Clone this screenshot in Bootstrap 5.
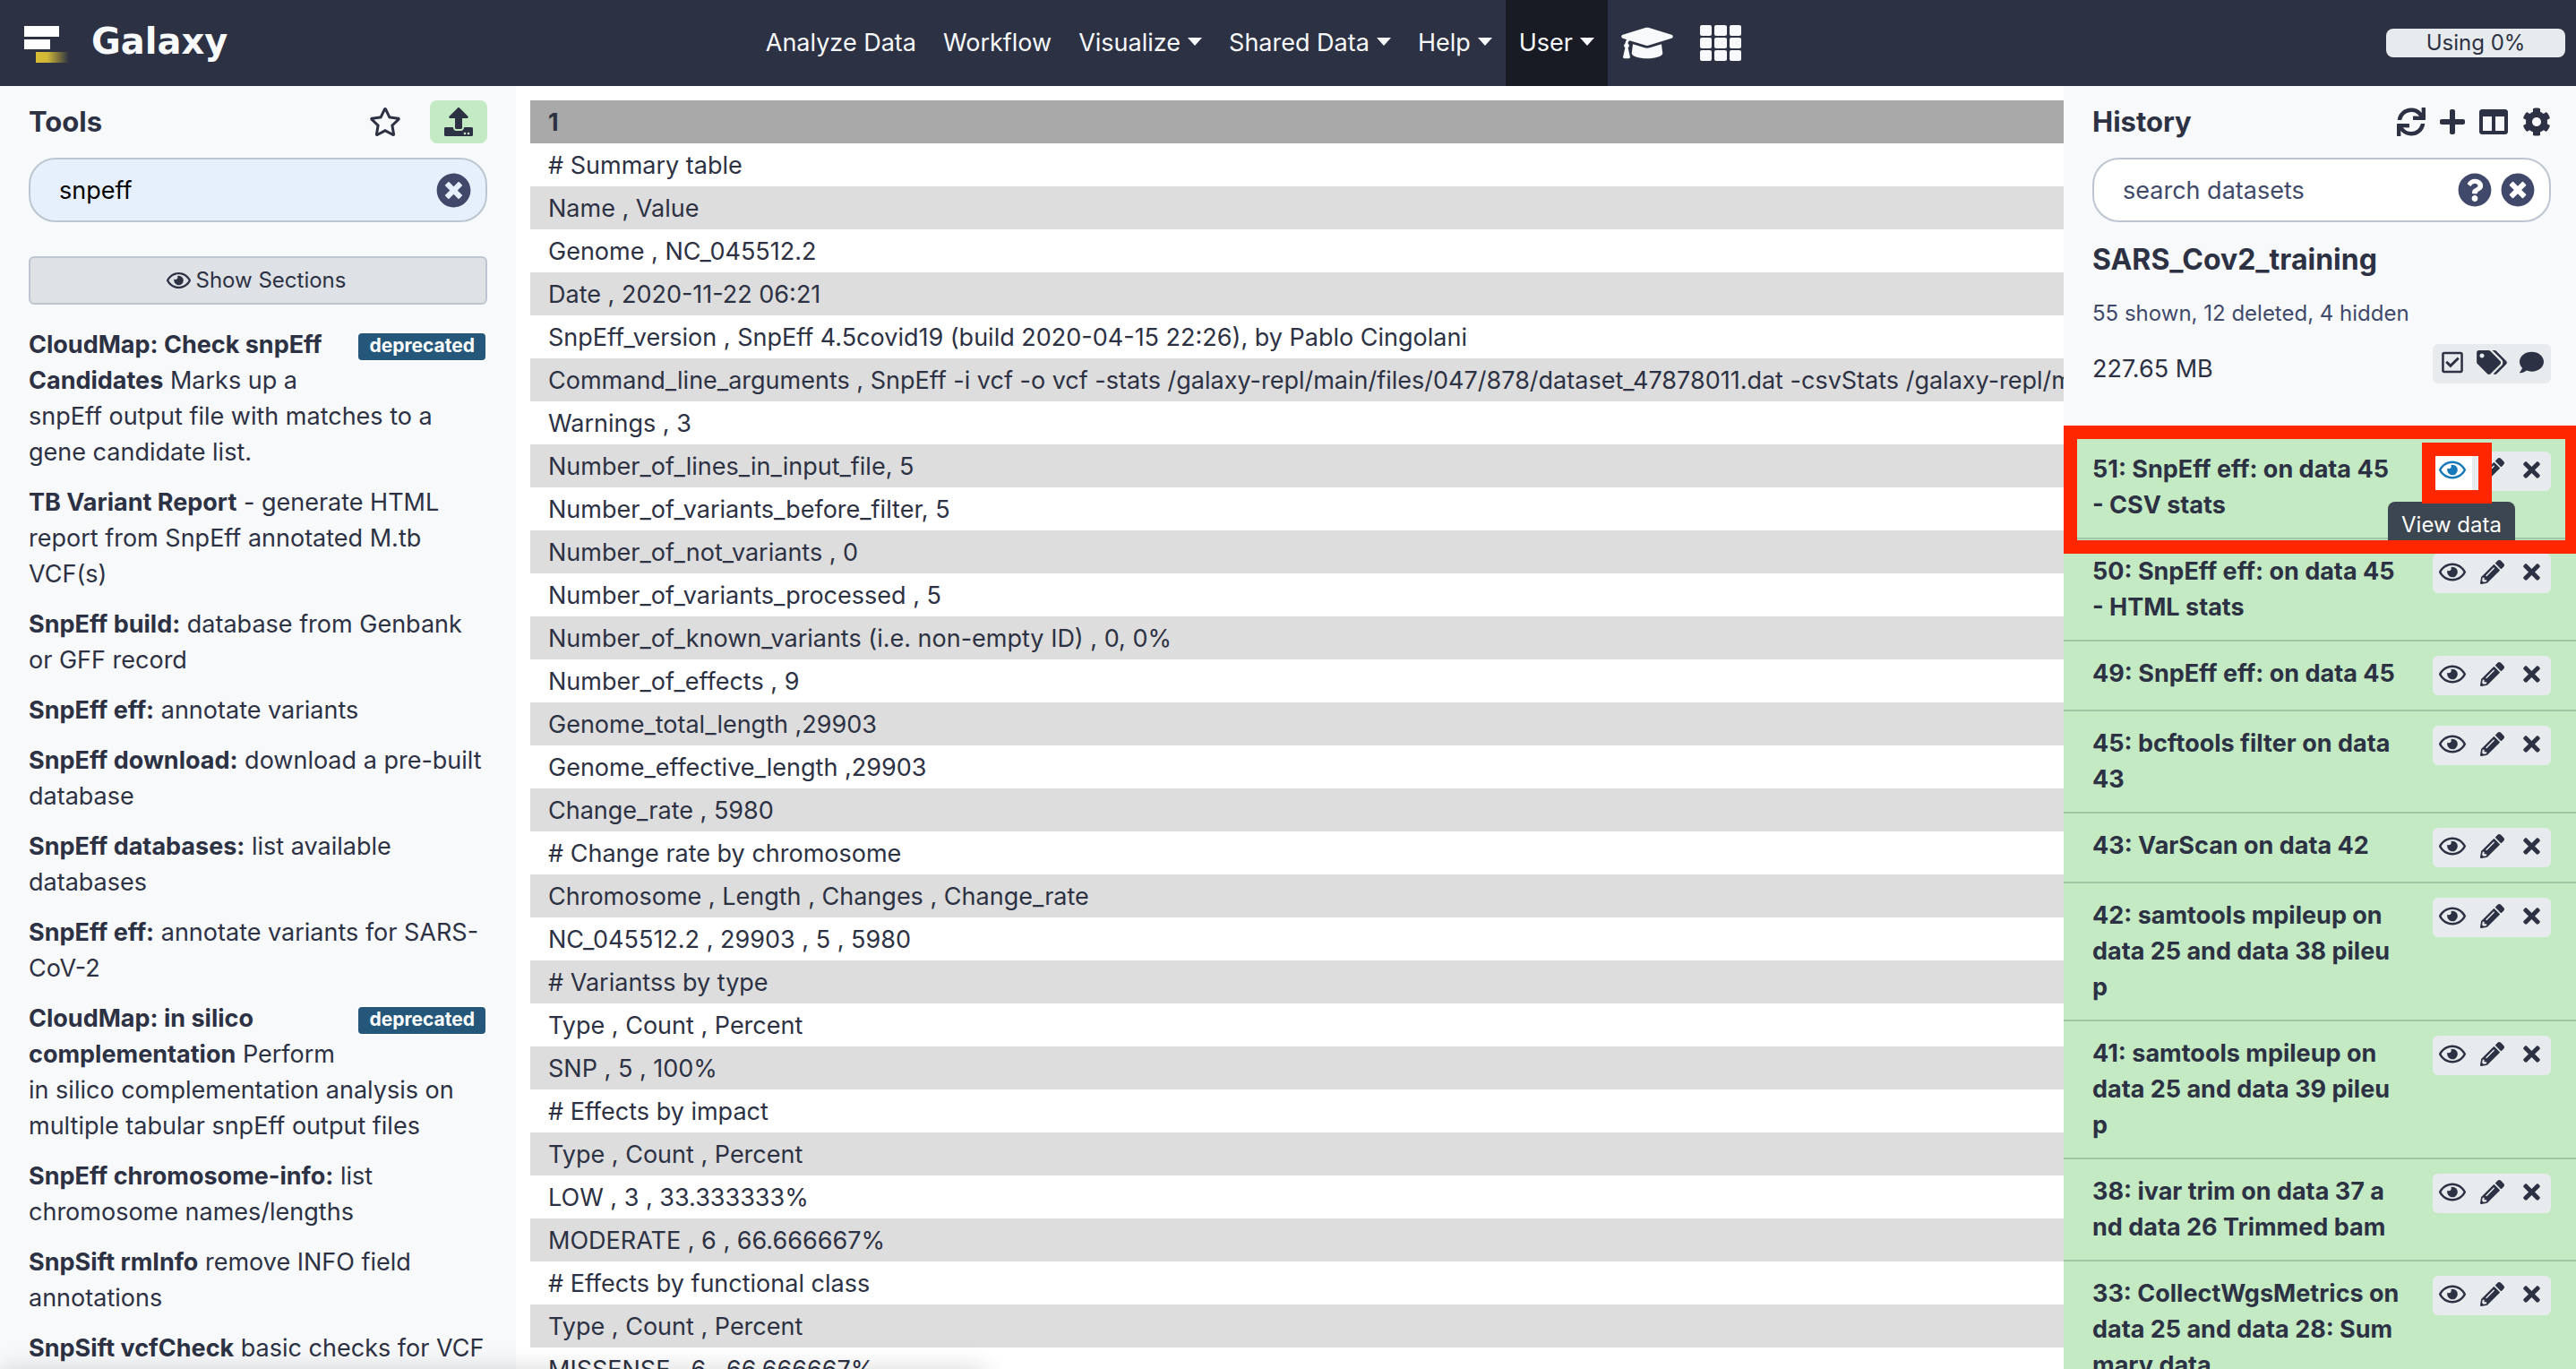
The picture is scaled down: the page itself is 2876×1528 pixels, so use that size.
<!DOCTYPE html>
<html lang="en">
<head>
<meta charset="utf-8">
<meta name="viewport" content="width=device-width, initial-scale=1">
<title>Galaxy</title>
<link href="https://cdn.jsdelivr.net/npm/bootstrap@5.3.0/dist/css/bootstrap.min.css" rel="stylesheet">
<script src="https://cdn.jsdelivr.net/npm/bootstrap@5.3.0/dist/js/bootstrap.bundle.min.js"></script>
<style>
:root { --ink: #2c3143; --soft-ink: #40496a; --panel: #f8f9fb; --ok: #c4eac4; --line: #bdc6d0; --chip: #e8ebee; }
body { font-family: Inter, "Liberation Sans", sans-serif; font-size: 27px; line-height: 40px; color: var(--ink); background: #fff; }
svg { fill: currentColor; display: block; flex: none; }
a { color: inherit; text-decoration: none; }
.masthead { height: 96px; background: var(--ink); color: #f8f9fb; }
.brand-area { flex: 0 0 29.2%; padding-left: 24px; gap: 24px; }
.brand-name { font-family: "DejaVu Sans", sans-serif; font-weight: 700; font-size: 40px; padding-bottom: 4px; }
.masthead .nav-link { display: flex; align-items: center; height: 96px; padding: 0 15px; color: inherit; }
.masthead .nav-link.current { background: #181a24; }
.masthead .dropdown-toggle::after { border-top: 9px solid; border-left: 8px solid transparent; border-right: 8px solid transparent; margin-left: 8px; margin-bottom: 4px; vertical-align: 0; }
.quota { width: 200px; height: 32px; line-height: 32px; border-radius: 8px; background: var(--chip); color: var(--ink); font-size: 24px; margin-right: 12px; }
.side-panel { background: var(--panel); overflow: hidden; }
.tools-panel { flex: 0 0 576px; padding: 16px 32px 0; }
.history-panel { flex: 0 0 572px; padding-top: 16px; }
.history-top { padding: 0 28px 0 32px; height: 376px; }
.panel-head { height: 48px; }
.panel-title { font-size: 31px; font-weight: 700; line-height: 48px; margin: 0; }
.icon-btn { border: 0; background: transparent; color: inherit; padding: 0; display: flex; align-items: center; justify-content: center; }
.upload-btn { width: 64px; height: 48px; background: var(--ok); border-radius: 8px; }
.search-box { height: 72px; margin-top: 16px; border: 2px solid var(--line); border-radius: 30px; background: #fff; padding: 0 16px 0 32px; gap: 10px; color: var(--soft-ink); }
.search-box.filled { background: #e6f0fd; }
.search-box input { border: 0; outline: 0; background: transparent; flex: 1 1 0; min-width: 0; padding: 2px 0 0; line-height: 40px; color: #000; }
.search-box input::placeholder { color: var(--soft-ink); opacity: 1; }
.sections-btn { height: 54px; margin: 38px 0 25px; border: 2px solid var(--line); border-radius: 6px; background: #dee1e6; color: var(--ink); font-size: 24px; gap: 6px; padding: 0 4px 0 0; }
.tool-link { display: block; margin-bottom: 16px; }
.old-tag { float: right; margin: 7px 2px 12px 12px; padding: 0 12px; height: 30px; line-height: 28px; font-size: 21px; font-weight: 700; color: #fff; background: #25577b; border-radius: 4px; box-shadow: 0 0 0 2px #fff; }
.center-panel { min-width: 0; flex: 1 1 0; padding: 16px 0 0 16px; overflow: hidden; }
.peek { width: 100%; white-space: nowrap; border-collapse: collapse; }
.peek th, .peek td { padding: 5px 20px 3px; height: 48px; }
.peek th { background: #a9a9a9; }
.peek tbody tr:nth-child(even) { background: #ddd; }
.workspace { height: calc(100vh - 96px); overflow: hidden; }
.history-name { font-size: 32px; font-weight: 700; line-height: 40px; margin: 22px 0 0; }
.history-counts { font-size: 24px; color: var(--soft-ink); margin-top: 20px; }
.size-row { height: 44px; margin-top: 14px; }
.size-row > span { padding-top: 8px; }
.chip-bar { width: 132px; height: 44px; background: var(--chip); border-radius: 6px; overflow: hidden; flex: none; }
.chip-bar .icon-btn { width: 44px; height: 44px; padding-bottom: 4px; }
.chip-bar .icon-btn.hot { background: #fff; color: #1779ba; }
.dataset { background: var(--ok); border-bottom: 2px solid #a0c4a4; padding: 16px 28px 16px 32px; font-weight: 700; position: relative; }
.tip { position: absolute; z-index: 1; right: 68px; top: 72px; width: 142px; height: 43px; padding-top: 6px; background: #3c4650; color: #fff; font-size: 24px; font-weight: 400; text-align: center; border-radius: 8px 8px 0 0; }
.ring-row { position: absolute; z-index: 2; left: 0; right: 0; top: -13px; height: 143px; border: 15px solid #ff2600; border-right-width: 12px; pointer-events: none; }
.ring-eye { position: absolute; z-index: 3; right: 94px; top: 6px; width: 78px; height: 68px; border: 15px solid #ff2600; pointer-events: none; }
.bottom-shade { position: fixed; left: 0; bottom: -40px; width: 1100px; height: 40px; box-shadow: 0 0 28px rgba(0,0,0,.16); }
</style>
</head>
<body>
<svg width="0" height="0" class="position-absolute" aria-hidden="true">
<symbol id="i-eye" viewBox="0 0 576 512"><path d="M288 144a110.94 110.94 0 0 0-31.24 5 55.4 55.4 0 0 1 7.24 27 56 56 0 0 1-56 56 55.4 55.4 0 0 1-27-7.24A111.71 111.71 0 1 0 288 144zm284.52 97.4C518.29 135.59 410.93 64 288 64S57.68 135.64 3.48 241.41a32.35 32.35 0 0 0 0 29.19C57.71 376.41 165.07 448 288 448s230.32-71.64 284.52-177.41a32.35 32.35 0 0 0 0-29.19zM288 400c-98.65 0-189.09-55-237.93-144C98.91 167 189.34 112 288 112s189.09 55 237.93 144C477.1 345 386.66 400 288 400z"/></symbol>
<symbol id="i-pencil" viewBox="0 0 512 512"><path d="M497.9 142.1l-46.1 46.1c-4.7 4.7-12.3 4.7-17 0l-111-111c-4.7-4.7-4.7-12.3 0-17l46.1-46.1c18.7-18.7 49.1-18.7 67.9 0l60.1 60.1c18.8 18.7 18.8 49.1 0 67.9zM284.2 99.8L21.6 362.4.4 483.9c-2.9 16.4 11.4 30.6 27.8 27.8l121.5-21.3 262.6-262.6c4.7-4.7 4.7-12.3 0-17l-111-111c-4.8-4.7-12.4-4.7-17.1 0zM124.1 339.9c-5.5-5.5-5.5-14.3 0-19.8l154-154c5.5-5.5 14.3-5.5 19.8 0s5.5 14.3 0 19.8l-154 154c-5.5 5.5-14.3 5.5-19.8 0zM88 424h48v36.3l-64.5 11.3-31.1-31.1L51.7 376H88v48z"/></symbol>
<symbol id="i-times" viewBox="0 0 352 512"><path d="M242.72 256l100.07-100.07c12.28-12.28 12.28-32.19 0-44.48l-22.24-22.24c-12.28-12.28-32.19-12.28-44.48 0L176 189.28 75.93 89.21c-12.28-12.28-32.19-12.28-44.48 0L9.21 111.45c-12.28 12.28-12.28 32.19 0 44.48L109.28 256 9.21 356.07c-12.28 12.28-12.28 32.19 0 44.48l22.24 22.24c12.28 12.28 32.2 12.28 44.48 0L176 322.72l100.07 100.07c12.28 12.28 32.2 12.28 44.48 0l22.24-22.24c12.28-12.28 12.28-32.19 0-44.48L242.72 256z"/></symbol>
<symbol id="i-clear" viewBox="0 0 512 512"><path d="M256 8C119 8 8 119 8 256s111 248 248 248 248-111 248-248S393 8 256 8zm121.6 313.1c4.7 4.7 4.7 12.3 0 17L338 377.6c-4.7 4.7-12.3 4.7-17 0L256 312l-65.1 65.6c-4.7 4.7-12.3 4.7-17 0L134.4 338c-4.7-4.7-4.7-12.3 0-17l65.6-65-65.6-65.1c-4.7-4.7-4.7-12.3 0-17l39.6-39.6c4.7-4.7 12.3-4.7 17 0l65 65.7 65.1-65.6c4.7-4.7 12.3-4.7 17 0l39.6 39.6c4.7 4.7 4.7 12.3 0 17L312 256l65.6 65.1z"/></symbol>
</svg>

<header class="masthead d-flex align-items-center">
  <a href="#" class="brand-area d-flex align-items-center">
    <svg width="54" height="48" viewBox="0 0 54 48" role="img" aria-label="Galaxy logo"><defs><linearGradient id="fade"><stop offset="0" stop-color="#d8bd34"/><stop offset=".35" stop-color="#d0b637"/><stop offset="1" stop-color="#d0b637" stop-opacity="0"/></linearGradient></defs><path fill="#fff" d="M3 5h39v12H3zM3 20h29v11H3z"/><path fill="url(#fade)" d="M16 34h37v12H16z"/></svg>
    <span class="brand-name">Galaxy</span>
  </a>
  <nav aria-label="Main">
    <ul class="nav flex-nowrap text-nowrap">
      <li class="nav-item"><a class="nav-link" href="#">Analyze Data</a></li>
      <li class="nav-item"><a class="nav-link" href="#">Workflow</a></li>
      <li class="nav-item"><a class="nav-link dropdown-toggle" href="#">Visualize</a></li>
      <li class="nav-item"><a class="nav-link dropdown-toggle" href="#">Shared Data</a></li>
      <li class="nav-item"><a class="nav-link dropdown-toggle" href="#">Help</a></li>
      <li class="nav-item"><a class="nav-link dropdown-toggle current" href="#">User</a></li>
      <li class="nav-item"><a class="nav-link" href="#" aria-label="Tutorials"><svg width="58" height="46" viewBox="0 0 640 512"><path d="M622.34 153.2L343.4 67.5c-15.2-4.67-31.6-4.67-46.79 0L17.66 153.2c-23.54 7.23-23.54 38.36 0 45.59l48.63 14.94c-10.67 13.19-17.23 29.28-17.88 46.9C38.78 266.15 32 276.11 32 288c0 10.78 5.68 19.85 13.86 25.65L20.33 428.53C18.11 438.52 25.71 448 35.94 448h56.11c10.24 0 17.84-9.48 15.62-19.47L82.14 313.65C90.32 307.85 96 298.78 96 288c0-11.57-6.47-21.25-15.66-26.87.76-15.02 8.44-28.3 20.69-36.72L296.6 284.5c9.06 2.78 26.44 6.25 46.79 0l278.95-85.7c23.55-7.24 23.55-38.36 0-45.6zM352.79 315.09c-28.53 8.76-52.84 3.92-65.59 0l-145.02-44.55L128 384c0 35.35 85.96 64 192 64s192-28.65 192-64l-14.18-113.47-145.03 44.56z"/></svg></a></li>
      <li class="nav-item"><a class="nav-link" href="#" aria-label="Scratchbook"><svg width="46" height="46" viewBox="0 0 46 46"><g><rect x="0" y="3" width="13" height="12" rx="2"/><rect x="16" y="3" width="14" height="12" rx="2"/><rect x="33" y="3" width="13" height="12" rx="2"/><rect x="0" y="17" width="13" height="12" rx="2"/><rect x="16" y="17" width="14" height="12" rx="2"/><rect x="33" y="17" width="13" height="12" rx="2"/><rect x="0" y="31" width="13" height="12" rx="2"/><rect x="16" y="31" width="14" height="12" rx="2"/><rect x="33" y="31" width="13" height="12" rx="2"/></g></svg></a></li>
    </ul>
  </nav>
  <div class="quota ms-auto text-center">Using 0%</div>
</header>

<main class="workspace d-flex">
  <aside class="side-panel tools-panel">
    <div class="panel-head d-flex align-items-center">
      <h2 class="panel-title me-auto">Tools</h2>
      <button class="icon-btn me-4" aria-label="Favorites"><svg width="36" height="32" viewBox="0 0 576 512"><path d="M528.1 171.5L382 150.2 316.7 17.8c-11.7-23.6-45.6-23.9-57.4 0L194 150.2 47.9 171.5c-26.2 3.8-36.7 36.1-17.7 54.6l105.7 103-25 145.5c-4.5 26.3 23.2 46 46.4 33.7L288 439.6l130.7 68.7c23.2 12.2 50.9-7.4 46.4-33.7l-25-145.5 105.7-103c19-18.5 8.5-50.8-17.7-54.6zM388.6 312.3l23.7 138.4L288 385.4l-124.3 65.3 23.7-138.4-100.6-98 139-20.2 62.2-126 62.2 126 139 20.2-100.6 98z"/></svg></button>
      <button class="icon-btn upload-btn ms-2" aria-label="Upload"><svg width="32" height="32" viewBox="0 0 512 512"><path d="M296 384h-80c-13.3 0-24-10.7-24-24V192h-87.7c-17.8 0-26.7-21.5-14.1-34.1L242.3 5.7c7.5-7.5 19.8-7.5 27.3 0l152.2 152.2c12.6 12.6 3.7 34.1-14.1 34.1H320v168c0 13.3-10.7 24-24 24zm216-8v112c0 13.3-10.7 24-24 24H24c-13.3 0-24-10.7-24-24V376c0-13.3 10.7-24 24-24h136v8c0 30.9 25.1 56 56 56h80c30.9 0 56-25.1 56-56v-8h136c13.3 0 24 10.7 24 24zm-124 88c0-11-9-20-20-20s-20 9-20 20 9 20 20 20 20-9 20-20zm64 0c0-11-9-20-20-20s-20 9-20 20 9 20 20 20 20-9 20-20z"/></svg></button>
    </div>
    <div class="search-box filled d-flex align-items-center">
      <input type="text" value="snpeff" aria-label="Search tools">
      <button class="icon-btn" aria-label="Clear search"><svg width="39" height="39"><use href="#i-clear"/></svg></button>
    </div>
    <button class="btn sections-btn w-100 d-flex align-items-center justify-content-center"><svg width="27" height="24"><use href="#i-eye"/></svg>Show Sections</button>
    <a class="tool-link" href="#"><span class="old-tag">deprecated</span><b>CloudMap: Check snpEff Candidates</b> Marks up a snpEff output file with matches to a gene candidate list.</a>
    <a class="tool-link" href="#"><b>TB Variant Report</b> - generate HTML report from SnpEff annotated M.tb VCF(s)</a>
    <a class="tool-link" href="#"><b>SnpEff build:</b> database from Genbank or GFF record</a>
    <a class="tool-link" href="#"><b>SnpEff eff:</b> annotate variants</a>
    <a class="tool-link" href="#"><b>SnpEff download:</b> download a pre-built database</a>
    <a class="tool-link" href="#"><b>SnpEff databases:</b> list available databases</a>
    <a class="tool-link" href="#"><b>SnpEff eff:</b> annotate variants for SARS-CoV-2</a>
    <a class="tool-link" href="#"><span class="old-tag">deprecated</span><b>CloudMap: in silico complementation</b> Perform in silico complementation analysis on multiple tabular snpEff output files</a>
    <a class="tool-link" href="#"><b>SnpEff chromosome-info:</b> list chromosome names/lengths</a>
    <a class="tool-link" href="#"><b>SnpSift rmInfo</b> remove INFO field annotations</a>
    <a class="tool-link" href="#"><b>SnpSift vcfCheck</b> basic checks for VCF</a>
  </aside>

  <section class="center-panel">
    <table class="peek">
      <thead><tr><th scope="col">1</th></tr></thead>
      <tbody>
        <tr><td># Summary table</td></tr>
        <tr><td>Name , Value</td></tr>
        <tr><td>Genome , NC_045512.2</td></tr>
        <tr><td>Date , 2020-11-22 06:21</td></tr>
        <tr><td>SnpEff_version , SnpEff 4.5covid19 (build 2020-04-15 22:26), by Pablo Cingolani</td></tr>
        <tr><td>Command_line_arguments , SnpEff -i vcf -o vcf -stats /galaxy-repl/main/files/047/878/dataset_47878011.dat -csvStats /galaxy-repl/main</td></tr>
        <tr><td>Warnings , 3</td></tr>
        <tr><td>Number_of_lines_in_input_file, 5</td></tr>
        <tr><td>Number_of_variants_before_filter, 5</td></tr>
        <tr><td>Number_of_not_variants , 0</td></tr>
        <tr><td>Number_of_variants_processed , 5</td></tr>
        <tr><td>Number_of_known_variants (i.e. non-empty ID) , 0, 0%</td></tr>
        <tr><td>Number_of_effects , 9</td></tr>
        <tr><td>Genome_total_length ,29903</td></tr>
        <tr><td>Genome_effective_length ,29903</td></tr>
        <tr><td>Change_rate , 5980</td></tr>
        <tr><td># Change rate by chromosome</td></tr>
        <tr><td>Chromosome , Length , Changes , Change_rate</td></tr>
        <tr><td>NC_045512.2 , 29903 , 5 , 5980</td></tr>
        <tr><td># Variantss by type</td></tr>
        <tr><td>Type , Count , Percent</td></tr>
        <tr><td>SNP , 5 , 100%</td></tr>
        <tr><td># Effects by impact</td></tr>
        <tr><td>Type , Count , Percent</td></tr>
        <tr><td>LOW , 3 , 33.333333%</td></tr>
        <tr><td>MODERATE , 6 , 66.666667%</td></tr>
        <tr><td># Effects by functional class</td></tr>
        <tr><td>Type , Count , Percent</td></tr>
        <tr><td>MISSENSE , 6 , 66.666667%</td></tr>
      </tbody>
    </table>
  </section>

  <aside class="side-panel history-panel">
    <div class="history-top">
      <div class="panel-head d-flex align-items-center gap-3">
        <h2 class="panel-title me-auto">History</h2>
        <button class="icon-btn" aria-label="Refresh"><svg width="32" height="32" viewBox="0 0 512 512"><path d="M440.65 12.57l4 82.77A247.16 247.16 0 0 0 255.83 8C134.73 8 33.91 94.92 12.29 209.82A12 12 0 0 0 24.09 224h49.05a12 12 0 0 0 11.67-9.26 175.91 175.91 0 0 1 317-56.94l-101.46-4.86a12 12 0 0 0-12.57 12v47.41a12 12 0 0 0 12 12H500a12 12 0 0 0 12-12V12a12 12 0 0 0-12-12h-47.37a12 12 0 0 0-11.98 12.57zM255.83 432a175.61 175.61 0 0 1-146-77.8l101.8 4.87a12 12 0 0 0 12.57-12v-47.4a12 12 0 0 0-12-12H12a12 12 0 0 0-12 12V500a12 12 0 0 0 12 12h47.35a12 12 0 0 0 12-12.6l-4.15-82.57A247.17 247.17 0 0 0 255.83 504c121.11 0 221.93-86.92 243.55-201.82a12 12 0 0 0-11.8-14.18h-49.05a12 12 0 0 0-11.67 9.26A175.86 175.86 0 0 1 255.83 432z"/></svg></button>
        <button class="icon-btn" aria-label="New history"><svg width="28" height="32" viewBox="0 0 448 512"><path d="M416 208H272V64c0-17.67-14.33-32-32-32h-32c-17.67 0-32 14.33-32 32v144H32c-17.67 0-32 14.33-32 32v32c0 17.67 14.33 32 32 32h144v144c0 17.67 14.33 32 32 32h32c17.67 0 32-14.33 32-32V304h144c17.67 0 32-14.33 32-32v-32c0-17.67-14.33-32-32-32z"/></svg></button>
        <button class="icon-btn" aria-label="View all histories"><svg width="32" height="32" viewBox="0 0 512 512"><path d="M464 32H48C21.49 32 0 53.49 0 80v352c0 26.51 21.49 48 48 48h416c26.51 0 48-21.49 48-48V80c0-26.51-21.49-48-48-48zM224 416H64V160h160v256zm224 0H288V160h160v256z"/></svg></button>
        <button class="icon-btn" aria-label="History options"><svg width="32" height="32" viewBox="0 0 512 512"><path d="M487.4 315.7l-42.6-24.6c4.3-23.2 4.3-47 0-70.2l42.6-24.6c4.9-2.8 7.1-8.6 5.5-14-11.1-35.6-30-67.8-54.7-94.6-3.8-4.1-10-5.1-14.8-2.3L380.8 110c-17.9-15.4-38.5-27.3-60.8-35.1V25.8c0-5.6-3.9-10.5-9.4-11.7-36.7-8.2-74.3-7.8-109.2 0-5.5 1.2-9.4 6.1-9.4 11.7V75c-22.2 7.9-42.8 19.8-60.8 35.1L88.7 85.5c-4.9-2.8-11-1.9-14.8 2.3-24.7 26.7-43.6 58.9-54.7 94.6-1.7 5.4.6 11.2 5.5 14L67.3 221c-4.3 23.2-4.3 47 0 70.2l-42.6 24.6c-4.9 2.8-7.1 8.6-5.5 14 11.1 35.6 30 67.8 54.7 94.6 3.8 4.1 10 5.1 14.8 2.3l42.6-24.6c17.9 15.4 38.5 27.3 60.8 35.1v49.2c0 5.6 3.9 10.5 9.4 11.7 36.7 8.2 74.3 7.8 109.2 0 5.5-1.2 9.4-6.1 9.4-11.7v-49.2c22.2-7.9 42.8-19.8 60.8-35.1l42.6 24.6c4.9 2.8 11 1.9 14.8-2.3 24.7-26.7 43.6-58.9 54.7-94.6 1.5-5.5-.7-11.3-5.6-14.1zM256 336c-44.1 0-80-35.9-80-80s35.9-80 80-80 80 35.9 80 80-35.9 80-80 80z"/></svg></button>
      </div>
      <div class="search-box d-flex align-items-center">
        <input type="text" placeholder="search datasets" aria-label="Search datasets">
        <button class="icon-btn" aria-label="Search help"><svg width="38" height="38" viewBox="0 0 512 512"><path d="M504 256c0 136.997-111.043 248-248 248S8 392.997 8 256C8 119.083 119.043 8 256 8s248 111.083 248 248zM262.655 90c-54.497 0-89.255 22.957-116.549 63.758-3.536 5.286-2.353 12.415 2.715 16.258l34.699 26.31c5.205 3.947 12.621 3.008 16.665-2.122 17.864-22.658 30.113-35.797 57.303-35.797 20.429 0 45.698 13.148 45.698 32.958 0 14.976-12.363 22.667-32.534 33.976C247.128 238.528 216 254.941 216 296v4c0 6.627 5.373 12 12 12h56c6.627 0 12-5.373 12-12v-1.333c0-28.462 83.186-29.647 83.186-106.667 0-58.002-60.165-102-116.531-102zM256 338c-25.365 0-46 20.635-46 46 0 25.364 20.635 46 46 46s46-20.636 46-46c0-25.365-20.635-46-46-46z"/></svg></button>
        <button class="icon-btn" aria-label="Clear search"><svg width="38" height="38"><use href="#i-clear"/></svg></button>
      </div>
      <h3 class="history-name">SARS_Cov2_training</h3>
      <div class="history-counts">55 shown, 12 deleted, 4 hidden</div>
      <div class="size-row d-flex justify-content-between">
        <span>227.65 MB</span>
        <div class="chip-bar d-flex">
          <button class="icon-btn" aria-label="Select datasets"><svg width="24" height="27" viewBox="0 0 448 512"><path d="M400 32H48C21.49 32 0 53.49 0 80v352c0 26.51 21.49 48 48 48h352c26.51 0 48-21.49 48-48V80c0-26.51-21.49-48-48-48zm0 400H48V80h352v352zm-35.864-241.724L191.547 361.48c-4.705 4.667-12.303 4.637-16.97-.068l-90.781-91.516c-4.667-4.705-4.637-12.303.069-16.971l22.719-22.536c4.705-4.667 12.303-4.637 16.97.069l59.792 60.277 141.352-140.216c4.705-4.667 12.303-4.637 16.97.068l22.536 22.718c4.667 4.706 4.637 12.304-.068 16.971z"/></svg></button>
          <button class="icon-btn" aria-label="Edit tags"><svg width="34" height="27" viewBox="0 0 640 512"><path d="M497.941 225.941L286.059 14.059A48 48 0 0 0 252.118 0H48C21.49 0 0 21.49 0 48v204.118a48 48 0 0 0 14.059 33.941l211.882 211.882c18.744 18.745 49.136 18.746 67.882 0l204.118-204.118c18.745-18.745 18.745-49.137 0-67.882zM112 160c-26.51 0-48-21.49-48-48s21.49-48 48-48 48 21.49 48 48-21.49 48-48 48zm513.941 133.823L421.823 497.941c-18.745 18.745-49.137 18.745-67.882 0l-.36-.36L527.64 323.522c16.999-16.999 26.36-39.6 26.36-63.64s-9.362-46.641-26.36-63.64L331.397 0h48.721a48 48 0 0 1 33.941 14.059l211.882 211.882c18.745 18.745 18.745 49.137 0 67.882z"/></svg></button>
          <button class="icon-btn" aria-label="Edit annotation"><svg width="27" height="27" viewBox="0 0 512 512"><path d="M256 32C114.6 32 0 125.1 0 240c0 49.6 21.4 95 57 130.7C44.5 421.1 2.7 466 2.2 466.5c-2.2 2.3-2.8 5.7-1.5 8.7S4.8 480 8 480c66.3 0 116-31.8 140.6-51.4 32.7 12.3 69 19.4 107.4 19.4 141.4 0 256-93.1 256-208S397.4 32 256 32z"/></svg></button>
        </div>
      </div>
    </div>

    <div class="dataset d-flex justify-content-between align-items-start">
      <a href="#">51: SnpEff eff: on data 45<br>- CSV stats</a>
      <div class="chip-bar d-flex"><button class="icon-btn hot" aria-label="View data"><svg width="30" height="27"><use href="#i-eye"/></svg></button><button class="icon-btn" aria-label="Edit attributes"><svg width="27" height="27"><use href="#i-pencil"/></svg></button><button class="icon-btn" aria-label="Delete"><svg width="19" height="27"><use href="#i-times"/></svg></button></div>
      <div class="tip" role="tooltip">View data</div>
      <div class="ring-row"></div>
      <div class="ring-eye"></div>
    </div>
    <div class="dataset d-flex justify-content-between align-items-start">
      <a href="#">50: SnpEff eff: on data 45<br>- HTML stats</a>
      <div class="chip-bar d-flex"><button class="icon-btn" aria-label="View data"><svg width="30" height="27"><use href="#i-eye"/></svg></button><button class="icon-btn" aria-label="Edit attributes"><svg width="27" height="27"><use href="#i-pencil"/></svg></button><button class="icon-btn" aria-label="Delete"><svg width="19" height="27"><use href="#i-times"/></svg></button></div>
    </div>
    <div class="dataset d-flex justify-content-between align-items-start">
      <a href="#">49: SnpEff eff: on data 45</a>
      <div class="chip-bar d-flex"><button class="icon-btn" aria-label="View data"><svg width="30" height="27"><use href="#i-eye"/></svg></button><button class="icon-btn" aria-label="Edit attributes"><svg width="27" height="27"><use href="#i-pencil"/></svg></button><button class="icon-btn" aria-label="Delete"><svg width="19" height="27"><use href="#i-times"/></svg></button></div>
    </div>
    <div class="dataset d-flex justify-content-between align-items-start">
      <a href="#">45: bcftools filter on data<br>43</a>
      <div class="chip-bar d-flex"><button class="icon-btn" aria-label="View data"><svg width="30" height="27"><use href="#i-eye"/></svg></button><button class="icon-btn" aria-label="Edit attributes"><svg width="27" height="27"><use href="#i-pencil"/></svg></button><button class="icon-btn" aria-label="Delete"><svg width="19" height="27"><use href="#i-times"/></svg></button></div>
    </div>
    <div class="dataset d-flex justify-content-between align-items-start">
      <a href="#">43: VarScan on data 42</a>
      <div class="chip-bar d-flex"><button class="icon-btn" aria-label="View data"><svg width="30" height="27"><use href="#i-eye"/></svg></button><button class="icon-btn" aria-label="Edit attributes"><svg width="27" height="27"><use href="#i-pencil"/></svg></button><button class="icon-btn" aria-label="Delete"><svg width="19" height="27"><use href="#i-times"/></svg></button></div>
    </div>
    <div class="dataset d-flex justify-content-between align-items-start">
      <a href="#">42: samtools mpileup on<br>data 25 and data 38 pileu<br>p</a>
      <div class="chip-bar d-flex"><button class="icon-btn" aria-label="View data"><svg width="30" height="27"><use href="#i-eye"/></svg></button><button class="icon-btn" aria-label="Edit attributes"><svg width="27" height="27"><use href="#i-pencil"/></svg></button><button class="icon-btn" aria-label="Delete"><svg width="19" height="27"><use href="#i-times"/></svg></button></div>
    </div>
    <div class="dataset d-flex justify-content-between align-items-start">
      <a href="#">41: samtools mpileup on<br>data 25 and data 39 pileu<br>p</a>
      <div class="chip-bar d-flex"><button class="icon-btn" aria-label="View data"><svg width="30" height="27"><use href="#i-eye"/></svg></button><button class="icon-btn" aria-label="Edit attributes"><svg width="27" height="27"><use href="#i-pencil"/></svg></button><button class="icon-btn" aria-label="Delete"><svg width="19" height="27"><use href="#i-times"/></svg></button></div>
    </div>
    <div class="dataset d-flex justify-content-between align-items-start">
      <a href="#">38: ivar trim on data 37 a<br>nd data 26 Trimmed bam</a>
      <div class="chip-bar d-flex"><button class="icon-btn" aria-label="View data"><svg width="30" height="27"><use href="#i-eye"/></svg></button><button class="icon-btn" aria-label="Edit attributes"><svg width="27" height="27"><use href="#i-pencil"/></svg></button><button class="icon-btn" aria-label="Delete"><svg width="19" height="27"><use href="#i-times"/></svg></button></div>
    </div>
    <div class="dataset d-flex justify-content-between align-items-start">
      <a href="#">33: CollectWgsMetrics on<br>data 25 and data 28: Sum<br>mary data</a>
      <div class="chip-bar d-flex"><button class="icon-btn" aria-label="View data"><svg width="30" height="27"><use href="#i-eye"/></svg></button><button class="icon-btn" aria-label="Edit attributes"><svg width="27" height="27"><use href="#i-pencil"/></svg></button><button class="icon-btn" aria-label="Delete"><svg width="19" height="27"><use href="#i-times"/></svg></button></div>
    </div>
  </aside>
</main>
<div class="bottom-shade"></div>
</body>
</html>
